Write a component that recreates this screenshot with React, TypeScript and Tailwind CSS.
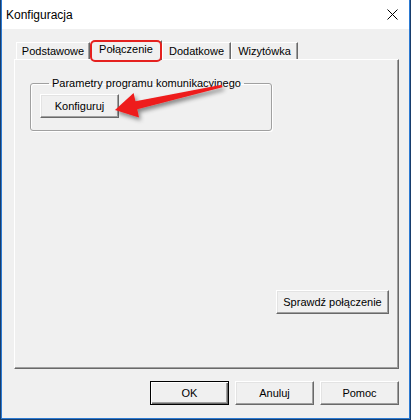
import React from 'react';

const font = { fontFamily: '"Liberation Sans", Arial, sans-serif' };

const btn =
  'h-[24px] bg-[#f0f0f0] text-[11px] text-black border border-t-white border-l-white border-r-[#696969] border-b-[#696969] shadow-[inset_-1px_-1px_0_#a0a0a0,inset_1px_1px_0_#e3e3e3]';

const Tab: React.FC<{ label: string; width: string; active?: boolean }> = ({ label, width, active }) => {
  if (active) {
    return (
      <div
        className={`relative z-10 ${width} h-[20px] flex items-center justify-center bg-[#f0f0f0] border-t border-l border-t-white border-l-white border-r border-r-[#696969] shadow-[inset_-1px_0_0_#a0a0a0] text-[11px] pb-[2px]`}
      >
        {label}
        <span className="absolute -left-[1px] -top-[1px] -right-[1px] -bottom-[2px] border-2 border-[#e5211f] rounded-[5px]" />
      </div>
    );
  }
  return (
    <div
      className={`${width} h-[17px] mb-[1px] flex items-center justify-center bg-[#f0f0f0] border-t border-l border-t-white border-l-white border-r border-r-[#696969] shadow-[inset_-1px_0_0_#a0a0a0] text-[11px]`}
    >
      {label}
    </div>
  );
};

const App: React.FC = () => {
  return (
    <div className="relative w-[411px] h-[420px] bg-[#183d6b] pl-px pr-px pb-px" style={font}>
      <div className="h-full flex flex-col bg-[#f0f0f0] border-l border-r border-b border-[#2b7ad3]">
        {/* title bar */}
        <div className="h-[29px] bg-white flex items-center justify-between pl-[4px] pr-[11px]">
          <span className="text-[12px] text-black">Konfiguracja</span>
          <svg width="11" height="11" viewBox="0 0 11 11">
            <path d="M0.5 0.5 L10.5 10.5 M10.5 0.5 L0.5 10.5" stroke="#000" strokeWidth="1" />
          </svg>
        </div>

        <div className="flex-1 flex flex-col pt-[11px] pl-[12px] pr-[10px] pb-[13px]">
          {/* tabs */}
          <div className="h-[20px] flex items-end pl-[2px]">
            <Tab label="Podstawowe" width="w-[74px]" />
            <Tab label="Połączenie" width="w-[72px]" active />
            <Tab label="Dodatkowe" width="w-[69px]" />
            <Tab label="Wizytówka" width="w-[67px]" />
          </div>

          {/* panel */}
          <div className="-mt-px flex-1 flex flex-col border border-t-white border-l-white border-r-[#696969] border-b-[#696969] shadow-[inset_-1px_-1px_0_#a0a0a0]">
            <fieldset className="ml-[15px] mt-[16px] w-[242px] h-[55px] border border-[#a0a0a0] rounded-[3px] shadow-[1px_1px_0_#fff,inset_1px_1px_0_#fff] pl-[9px]">
              <legend className="ml-[9px] px-[3px] text-[11px] leading-[14px]">
                Parametry programu komunikacyjnego
              </legend>
              <button className={`${btn} w-[79px] mt-[4px]`}>Konfiguruj</button>
            </fieldset>

            <div className="mt-auto flex justify-end pr-[9px] pb-[54px]">
              <button className={`${btn} w-[113px]`}>Sprawdź połączenie</button>
            </div>
          </div>

          {/* dialog buttons */}
          <div className="mt-[12px] flex justify-end gap-[6px]">
            <button className="w-[79px] h-[24px] bg-[#f0f0f0] text-[11px] text-black border border-black shadow-[inset_1px_1px_0_#fff,inset_-1px_-1px_0_#696969,inset_-2px_-2px_0_#a0a0a0]">
              OK
            </button>
            <button className={`${btn} w-[79px]`}>Anuluj</button>
            <button className={`${btn} w-[79px]`}>Pomoc</button>
          </div>
        </div>
      </div>

      {/* annotation arrow */}
      <svg className="absolute inset-0 pointer-events-none" width="411" height="420" viewBox="0 0 411 420">
        <defs>
          <filter id="sh" x="-20%" y="-50%" width="140%" height="200%">
            <feDropShadow dx="2" dy="3" stdDeviation="2" floodColor="#000" floodOpacity="0.45" />
          </filter>
        </defs>
        <polygon
          points="115,110 139,117.5 137.3,109.2 222.4,87.2 221.8,84.8 135.5,101.3 133.6,93"
          fill="#ee1c1c"
          filter="url(#sh)"
        />
      </svg>
    </div>
  );
};

export default App;
